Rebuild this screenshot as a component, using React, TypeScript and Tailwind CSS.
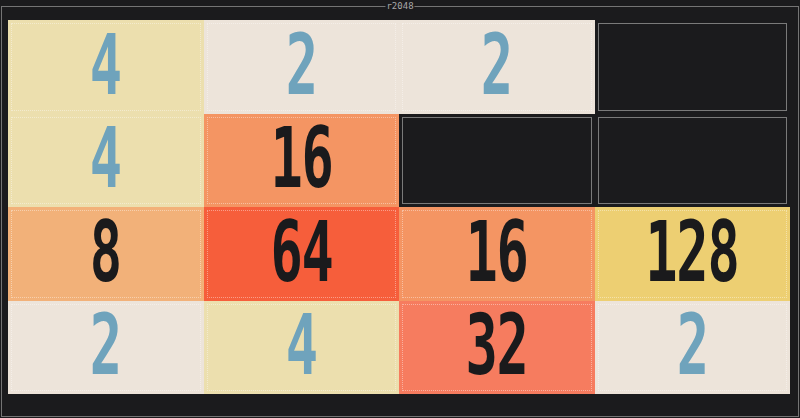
const board: number[][] = [
  [4, 2, 2, 0],
  [4, 16, 0, 0],
  [8, 64, 16, 128],
  [2, 4, 32, 2],
];

const tileBg: Record<number, string> = {
  2: "bg-[#ede4da]",
  4: "bg-[#ecdfae]",
  8: "bg-[#f2b179]",
  16: "bg-[#f49563]",
  32: "bg-[#f67c5f]",
  64: "bg-[#f65e3b]",
  128: "bg-[#edcf72]",
};

function Tile({ value }: { value: number }) {
  if (value === 0) {
    return (
      <div className="p-[3px] h-full">
        <div className="h-full border border-[#7a7a7a]" />
      </div>
    );
  }
  const light = value <= 4;
  return (
    <div className={`p-[3px] h-full ${tileBg[value]}`}>
      <div className="h-full border border-dotted border-white/40 flex items-center justify-center">
        <span
          className={`inline-block scale-x-[0.64] -translate-y-[2px] font-bold text-[84px] leading-[60px] tracking-[-2px] ${
            light ? "text-[#6fa3bc]" : "text-[#1a1a1c]"
          }`}
          style={{ fontFamily: '"DejaVu Sans Mono", monospace' }}
        >
          {value}
        </span>
      </div>
    </div>
  );
}

export default function App() {
  return (
    <div className="w-[800px] h-[418px] bg-[#1b1b1d] pt-[6px] px-[1px] pb-[1px]">
      <div className="relative h-full border border-[#747474]">
        <div
          className="absolute left-1/2 -top-[6px] -translate-x-1/2 bg-[#1b1b1d] px-[1px] text-[9px] leading-[11px] text-[#a8a8a8]"
          style={{ fontFamily: '"DejaVu Sans Mono", monospace' }}
        >
          r2048
        </div>
        <div className="ml-[6px] mt-[13px] w-[782px] h-[374px] grid grid-cols-4 grid-rows-4">
          {board.flat().map((v, i) => (
            <Tile key={i} value={v} />
          ))}
        </div>
      </div>
    </div>
  );
}
